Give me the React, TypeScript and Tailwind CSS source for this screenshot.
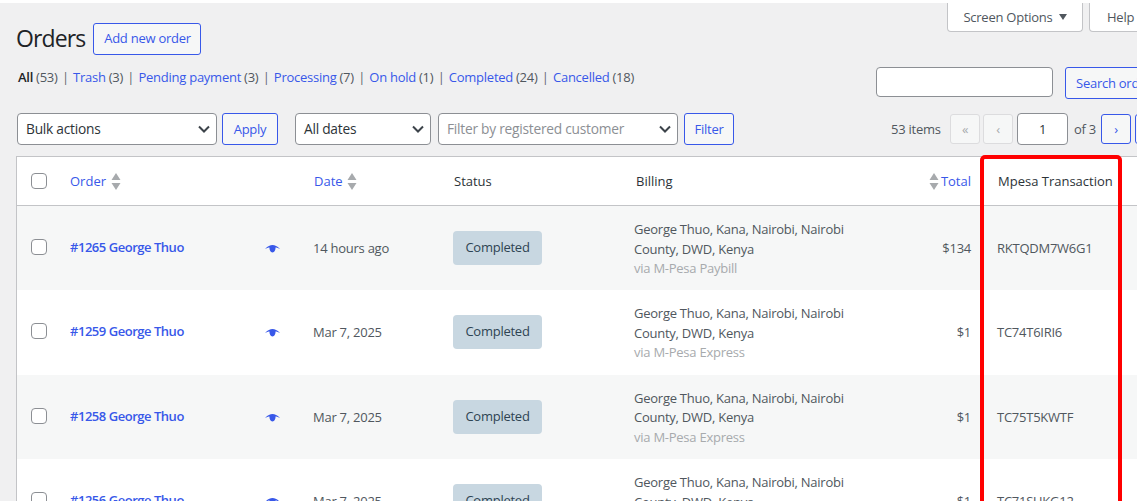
const blue = "text-[#3858e9]"

const orders = [
  { id: "#1265 George Thuo", date: "14 hours ago", via: "via M-Pesa Paybill", total: "$134", code: "RKTQDM7W6G1" },
  { id: "#1259 George Thuo", date: "Mar 7, 2025", via: "via M-Pesa Express", total: "$1", code: "TC74T6IRI6" },
  { id: "#1258 George Thuo", date: "Mar 7, 2025", via: "via M-Pesa Express", total: "$1", code: "TC75T5KWTF" },
  { id: "#1256 George Thuo", date: "Mar 7, 2025", via: "via M-Pesa Express", total: "$1", code: "TC71SUKG12" },
]

const tabs = [
  { label: "Trash", count: "(3)" },
  { label: "Pending payment", count: "(3)" },
  { label: "Processing", count: "(7)" },
  { label: "On hold", count: "(1)" },
  { label: "Completed", count: "(24)" },
  { label: "Cancelled", count: "(18)" },
]

const rowGrid = "grid grid-cols-[53px_243px_140px_181px_290px_47px_1fr]"

function Chevron() {
  return (
    <svg width="16" height="16" viewBox="0 0 16 16" className="shrink-0">
      <path d="M3 5.5 8 10.5 13 5.5" fill="none" stroke="#3c434a" strokeWidth="2" />
    </svg>
  )
}

function FakeSelect({ label, width, muted }: { label: string; width: string; muted?: boolean }) {
  return (
    <div className={`${width} h-[32px] shrink-0 flex items-center justify-between pl-[8px] pr-[4px] bg-white border border-[#8c8f94] rounded-[4px] text-[13.75px]`}>
      <span className={muted ? "text-[#8c8f94]" : "text-[#2c3338]"}>{label}</span>
      <Chevron />
    </div>
  )
}

function OutlineButton({ children, className = "" }: { children: React.ReactNode; className?: string }) {
  return (
    <div className={`h-[32px] shrink-0 flex items-center justify-center bg-[#f6f7f7] border border-[#3858e9] rounded-[3px] ${blue} ${className}`}>
      {children}
    </div>
  )
}

function Checkbox() {
  return <div className="w-[16px] h-[16px] bg-white border border-[#8c8f94] rounded-[4px]" />
}

function SortArrows() {
  return (
    <svg width="10" height="17" viewBox="0 0 10 17" className="shrink-0">
      <path d="M5 0 9.500 7H.5z M.5 10h9L5 17z" fill="#a7aaad" />
    </svg>
  )
}

function Eye() {
  return (
    <svg width="15" height="8" viewBox="0 0 15 8" className="block">
      <path d="M0 4C3 1 5 0 7.500 0S12 1 15 4C12.500 2.800 11 2.600 10.500 2.600 10.700 5 9.500 7.500 7.500 7.500S4.300 5 4.500 2.600C4 2.600 2.500 2.800 0 4z" fill="#3858e9" />
    </svg>
  )
}

function PagerBox({ children, disabled }: { children: React.ReactNode; disabled?: boolean }) {
  return (
    <div
      className={`w-[30px] h-[30px] shrink-0 flex items-center justify-center bg-[#f6f7f7] border rounded-[3px] ${
        disabled ? "border-[#dcdcde] text-[#a7aaad]" : "border-[#3858e9] text-[#3858e9]"
      }`}
    >
      {children}
    </div>
  )
}

export default function App() {
  return (
    <div className="relative w-[1137px] h-[501px] overflow-hidden bg-[#f0f0f1] border-t-[3px] border-white text-[13px] leading-[20px] text-[#50575e] font-['Open_Sans','Noto_Sans',sans-serif] tracking-[-0.25px]">
      {/* screen meta tabs */}
      <div className="flex justify-end gap-[6px] -mr-[60px]">
        <div className="w-[136px] h-[29px] shrink-0 flex items-center justify-center gap-[6px] bg-white border border-t-0 border-[#c3c4c7] rounded-b-[4px]">
          Screen Options
          <span className="w-0 h-0 border-x-[4px] border-x-transparent border-t-[6px] border-t-[#50575e]" />
        </div>
        <div className="w-[108px] h-[29px] shrink-0 flex items-center pl-[17px] bg-white border border-t-0 border-[#c3c4c7] rounded-b-[4px]">
          Help
        </div>
      </div>

      {/* heading */}
      <div className="flex items-center mt-[-9px] pl-[16px] h-[30px]">
        <h1 className="w-[69px] text-[23px] font-normal tracking-[-0.9px] text-[#1d2327] leading-[30px]">Orders</h1>
        <OutlineButton className="ml-[8px] mt-[1px] w-[108px] h-[30px] pl-[1px] pb-[2px]">Add new order</OutlineButton>
      </div>

      {/* status tabs + search */}
      <div className="flex items-start pl-[18px] mt-[14px] h-[46px]">
        <div className="flex items-center w-[858px] shrink-0">
          <span className="font-semibold text-[#1d2327]">All</span>
          <span className="ml-[3px]">(53)</span>
          {tabs.map(t => (
            <span key={t.label} className="flex items-center">
              <span className="mx-[4.25px] text-[#646970]">|</span>
              <span className={blue}>{t.label}</span>
              <span className="ml-[3px]">{t.count}</span>
            </span>
          ))}
        </div>
        <div className="w-[177px] h-[30px] shrink-0 bg-white border border-[#8c8f94] rounded-[4px]" />
        <OutlineButton className="ml-[12px] w-[110px] h-[30px] pb-[1px] !justify-start pl-[10px] whitespace-nowrap">Search orders</OutlineButton>
      </div>

      {/* filters + pagination */}
      <div className="flex items-center pl-[17px] h-[32px]">
        <FakeSelect label="Bulk actions" width="w-[200px]" />
        <OutlineButton className="ml-[5px] w-[56px]">Apply</OutlineButton>
        <div className="ml-[17px]">
          <FakeSelect label="All dates" width="w-[136px]" />
        </div>
        <div className="ml-[7px]">
          <FakeSelect label="Filter by registered customer" width="w-[240px]" muted />
        </div>
        <OutlineButton className="ml-[6px] w-[50px]">Filter</OutlineButton>
        <span className="ml-[157px] w-[59px] shrink-0">53 items</span>
        <div className="flex items-center shrink-0">
          <PagerBox disabled>«</PagerBox>
          <div className="ml-[3px]">
            <PagerBox disabled>‹</PagerBox>
          </div>
          <div className="ml-[4px] w-[51px] h-[32px] flex items-center justify-center bg-white border border-[#8c8f94] rounded-[4px] text-[#2c3338]">
            1
          </div>
          <span className="ml-[6px] w-[27px]">of 3</span>
          <PagerBox>›</PagerBox>
          <div className="ml-[4px]">
            <PagerBox>»</PagerBox>
          </div>
        </div>
      </div>

      {/* orders table */}
      <div className="ml-[16px] mt-[11px] w-[1200px] border-l border-t border-[#c3c4c7] bg-white">
        <div className={`${rowGrid} h-[49px] items-center border-b border-[#c3c4c7] text-[#2c3338] tracking-normal`}>
          <div className="pl-[14px]">
            <Checkbox />
          </div>
          <div className={`flex items-center gap-[5px] ${blue}`}>
            Order <SortArrows />
          </div>
          <div className={`flex items-center gap-[4px] pl-[1px] ${blue}`}>
            Date <SortArrows />
          </div>
          <div className="pl-[1px]">Status</div>
          <div className="pl-[2px]">Billing</div>
          <div className={`flex items-center justify-end gap-[2px] -ml-[20px] ${blue}`}>
            <SortArrows /> Total
          </div>
          <div className="pl-[27px]">Mpesa Transaction</div>
        </div>

        {orders.map((o, i) => (
          <div key={o.id} className={`${rowGrid} h-[84.4px] pt-[14px] leading-[19.5px] ${i % 2 === 0 ? "bg-[#f6f7f7]" : "bg-white"}`}>
            <div className="pl-[14px] pt-[19px]">
              <Checkbox />
            </div>
            <div className="flex items-start justify-between pr-[33px] pt-[18px]">
              <span className={`font-semibold tracking-[-0.47px] ${blue}`}>{o.id}</span>
              <span className="mt-[7px]">
                <Eye />
              </span>
            </div>
            <div className="pt-[19px]">{o.date}</div>
            <div className="pt-[11px]">
              <div className="w-[89px] h-[34px] pb-[1px] flex items-center justify-center rounded-[4px] bg-[#c8d7e1] text-[#2e4453]">
                Completed
              </div>
            </div>
            <div>
              <div>George Thuo, Kana, Nairobi, Nairobi</div>
              <div>County, DWD, Kenya</div>
              <div className="text-[#a7aaad]">{o.via}</div>
            </div>
            <div className="pt-[19px] text-right">{o.total}</div>
            <div className="pt-[19px] pl-[26px]">{o.code}</div>
          </div>
        ))}
      </div>

      {/* red highlight drawn over the screenshot */}
      <div className="absolute left-[980px] top-[152px] w-[142px] h-[400px] border-[4px] border-[#ff0000] rounded-[5px]" />
    </div>
  )
}
